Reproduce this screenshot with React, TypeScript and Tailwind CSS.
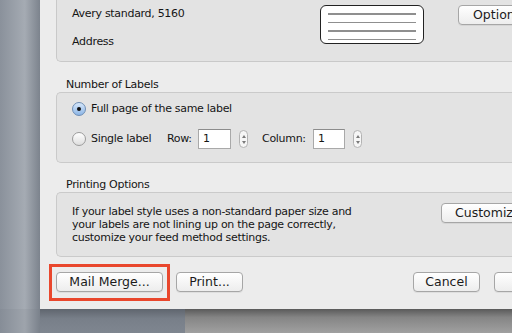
const font = { fontFamily: '"DejaVu Sans", "Liberation Sans", sans-serif' }

const Button = ({ label, className = '' }: { label: string; className?: string }) => (
  <button
    className={`h-[20px] shrink-0 rounded-[4px] border border-[#a6a6a6] bg-gradient-to-b from-[#ffffff] to-[#ededed] text-[12.5px] leading-none text-[#1b1b1b] shadow-[0_1px_0_rgba(0,0,0,0.06)] ${className}`}
  >
    {label}
  </button>
)

const Radio = ({ checked }: { checked?: boolean }) =>
  checked ? (
    <span className="flex h-[14px] w-[14px] shrink-0 items-center justify-center rounded-full border border-[#6d8db5] bg-gradient-to-b from-[#d6e7fa] to-[#8db6e6]">
      <span className="h-[4px] w-[4px] rounded-full bg-[#111]" />
    </span>
  ) : (
    <span className="h-[14px] w-[14px] shrink-0 rounded-full border border-[#9c9c9c] bg-gradient-to-b from-[#ffffff] to-[#dedede]" />
  )

const Stepper = () => (
  <span className="flex h-[18px] w-[9px] shrink-0 flex-col items-center justify-center gap-[3px] rounded-full border border-[#b3b3b3] bg-[#f6f6f6]">
    <span className="h-0 w-0 border-x-[2px] border-b-[3px] border-x-transparent border-b-[#7a7a7a]" />
    <span className="h-0 w-0 border-x-[2px] border-t-[3px] border-x-transparent border-t-[#7a7a7a]" />
  </span>
)

const NumberInput = ({ w }: { w: string }) => (
  <span className={`flex h-[20px] ${w} items-center border border-[#a9a9a9] border-t-[#8c8c8c] bg-white pl-[4px] text-[11px]`}>1</span>
)

export default function App() {
  return (
    <div className="flex h-[333px] w-[512px] flex-col overflow-hidden" style={font}>
      <div className="flex h-[309px]">
        <div className="w-[40px] shrink-0 bg-[linear-gradient(to_right,#8a919b,#a5abb3_62%,#7c838d)]" />
        <div className="flex w-[560px] shrink-0 flex-col bg-[#ececec] pl-4 text-[11px] tracking-[-0.3px] text-[#151515]">
          {/* label box */}
          <div className="flex h-[62px] rounded-bl-[5px] border-b border-l border-[#c9c9c9] bg-[#e3e3e3] pl-[15px]">
            <div className="flex w-[248px] flex-col gap-[14px] pt-[7px] leading-[14px]">
              <span>Avery standard, 5160</span>
              <span>Address</span>
            </div>
            <div className="mt-[5px] flex h-[39px] w-[104px] flex-col gap-[7px] rounded-[6px] border border-[#222] bg-white px-[7px] pt-[7px]">
              <span className="h-[1.5px] bg-[#8f8f8f]" />
              <span className="h-[1.5px] bg-[#8f8f8f]" />
              <span className="h-[1.5px] bg-[#8f8f8f]" />
              <span className="h-[1.5px] bg-[#8f8f8f]" />
            </div>
            <Button label="Options..." className="ml-[34px] mt-[5px] w-[90px] pl-[14px] text-left tracking-normal" />
          </div>

          <div className="mt-[16px] pl-[10px] leading-[14px]">Number of Labels</div>
          <div className="flex h-[71px] flex-col gap-[10px] rounded-l-[5px] border border-r-0 border-[#cacaca] bg-[#e3e3e3] pl-[15px] pt-[6px]">
            <div className="flex h-[20px] items-center">
              <Radio checked />
              <span className="ml-[5px]">Full page of the same label</span>
            </div>
            <div className="flex h-[20px] items-center">
              <Radio />
              <span className="ml-[5px] w-[76px]">Single label</span>
              <span className="w-[31px]">Row:</span>
              <NumberInput w="w-[33px]" />
              <span className="ml-[8px]"><Stepper /></span>
              <span className="ml-[14px] w-[51px]">Column:</span>
              <NumberInput w="w-[32px]" />
              <span className="ml-[8px]"><Stepper /></span>
            </div>
          </div>

          <div className="mt-[15px] pl-[10px] leading-[14px]">Printing Options</div>
          <div className="flex h-[65px] rounded-l-[5px] border border-r-0 border-[#cacaca] bg-[#e3e3e3] pl-[15px]">
            <p className="w-[369px] pt-[12px] leading-[13px]">
              If your label style uses a non-standard paper size and
              <br />
              your labels are not lining up on the page correctly,
              <br />
              customize your feed method settings.
            </p>
            <Button label="Customize..." className="mt-[10px] w-[90px] pl-[13px] text-left tracking-normal" />
          </div>

          <div className="mt-[7px] flex items-start tracking-normal">
            {/* red highlight round the Mail Merge button */}
            <div className="-ml-[7px] border-[3px] border-[#e9472d] pb-[6px] pl-[4px] pr-[4px] pt-[5px]">
              <Button label="Mail Merge..." className="block w-[107px]" />
            </div>
            <Button label="Print..." className="ml-[6px] mt-[8px] w-[67px]" />
            <Button label="Cancel" className="ml-[170px] mt-[8px] w-[67px]" />
            <Button label="OK" className="ml-[14px] mt-[8px] w-[67px]" />
          </div>
        </div>
      </div>
      <div className="flex h-[24px]">
        <div className="w-[40px] bg-[linear-gradient(to_right,#868d97,#9ea4ac_62%,#7a818b)]" />
        <div className="w-[145px] bg-[linear-gradient(to_bottom,#5f656e,#787f89_40%,#7f8690)]" />
        <div className="flex-1 bg-[linear-gradient(to_bottom,#5a5a5a,#858585_35%,#a0a0a0)]" />
      </div>
    </div>
  )
}
